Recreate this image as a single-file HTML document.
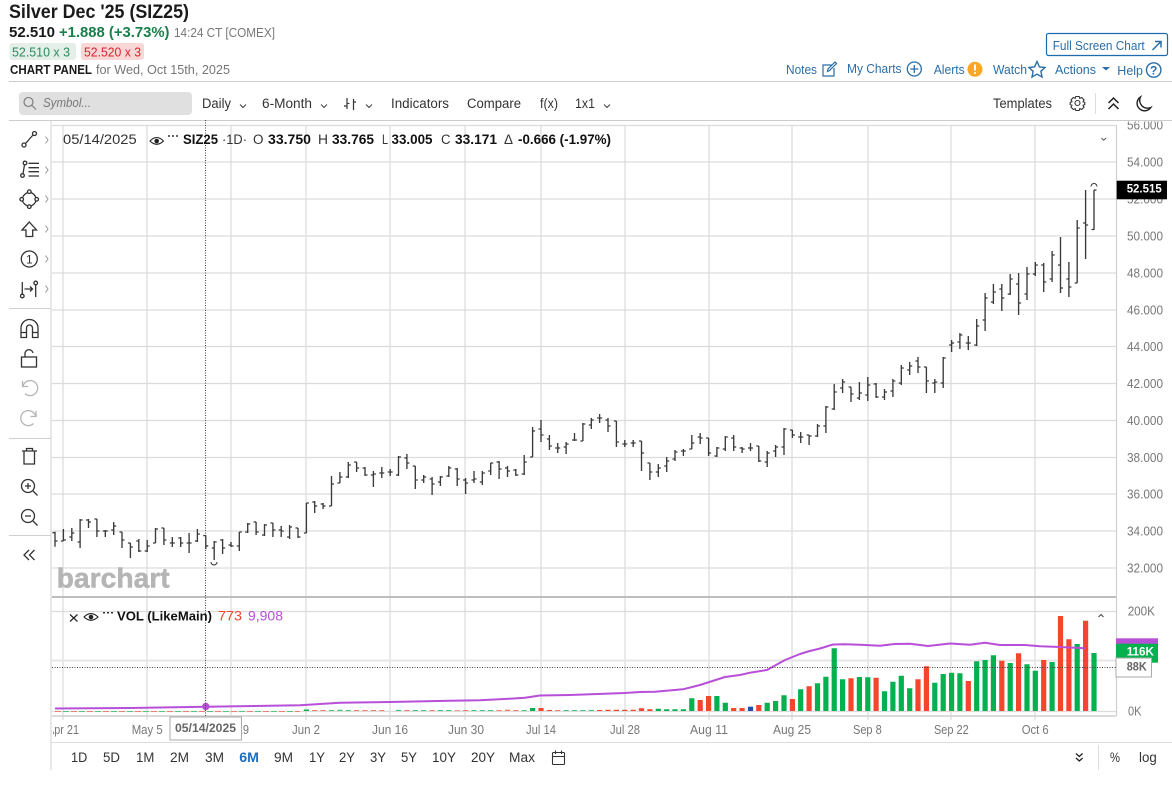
<!DOCTYPE html>
<html><head><meta charset="utf-8"><title>Silver Dec '25</title>
<style>
html,body{margin:0;padding:0;background:#fff;overflow:hidden}
svg{display:block}
text{font-family:"Liberation Sans",Arial,sans-serif;white-space:pre}
.b{font-weight:bold}
.t{font-size:13.5px;fill:#333}
.n{font-size:13px;fill:#2a6ea8}
.y{font-size:12.5px;fill:#777}
.x{font-size:12.5px;fill:#777}
.r{font-size:14px;fill:#333}
.i{fill:none;stroke:#333;stroke-width:1.3}
.g{fill:none;stroke:#b5b5b5;stroke-width:1.3}
</style></head><body>
<svg width="1172" height="787" viewBox="0 0 1172 787" xmlns="http://www.w3.org/2000/svg">
<rect width="1172" height="787" fill="#fff"/>

<!-- header -->
<text x="9" y="18" class="b" font-size="19" fill="#1a1a1a" textLength="180" lengthAdjust="spacingAndGlyphs">Silver Dec '25 (SIZ25)</text>
<text x="9" y="37" class="b" font-size="15" fill="#1a1a1a" textLength="46" lengthAdjust="spacingAndGlyphs">52.510</text>
<text x="59" y="37" class="b" font-size="15" fill="#1a7f4b" textLength="110.5" lengthAdjust="spacingAndGlyphs">+1.888 (+3.73%)</text>
<text x="174" y="37" font-size="13" fill="#777" textLength="101" lengthAdjust="spacingAndGlyphs">14:24 CT [COMEX]</text>
<rect x="9.5" y="43" width="66.5" height="17" rx="3" fill="#e3efe8"/>
<text x="12" y="56.5" font-size="13" fill="#2d8a5b" textLength="58" lengthAdjust="spacingAndGlyphs">52.510 x 3</text>
<rect x="81" y="43" width="63" height="17" rx="3" fill="#f8d7d7"/>
<text x="84" y="56.5" font-size="13" fill="#d9232e" textLength="57" lengthAdjust="spacingAndGlyphs">52.520 x 3</text>
<text x="10" y="74" class="b" font-size="12.5" fill="#1a1a1a" textLength="82" lengthAdjust="spacingAndGlyphs">CHART PANEL</text>
<text x="96" y="74" font-size="13" fill="#777" textLength="134" lengthAdjust="spacingAndGlyphs">for Wed, Oct 15th, 2025</text>
<path d="M9 81.5H1172" stroke="#ccc" stroke-width="1"/>

<!-- top-right links -->
<rect x="1046.5" y="33.5" width="121" height="22" rx="2" fill="#fff" stroke="#1e6bb0" stroke-width="1.2"/>
<text x="1052.7" y="50" class="n" textLength="92" lengthAdjust="spacingAndGlyphs">Full Screen Chart</text>
<path d="M1152.5 50L1160.5 42M1155 41.5H1161V47.5" fill="none" stroke="#2a6ea8" stroke-width="1.5"/>
<text x="786" y="74" class="n" textLength="31" lengthAdjust="spacingAndGlyphs">Notes</text>
<path d="M832 65H823V76H834V68M827.5 71.5L828 69L835 62L836.5 63.5L829.5 70.5Z" fill="none" stroke="#2a6ea8" stroke-width="1.2"/>
<text x="847" y="73" class="n" textLength="54.5" lengthAdjust="spacingAndGlyphs">My Charts</text>
<circle cx="914.3" cy="69" r="7" fill="none" stroke="#2a6ea8" stroke-width="1.3"/>
<path d="M910.3 69H918.3M914.3 65V73" stroke="#2a6ea8" stroke-width="1.3"/>
<text x="933.7" y="74" class="n" textLength="31" lengthAdjust="spacingAndGlyphs">Alerts</text>
<circle cx="975" cy="69.3" r="7.5" fill="#f9a825"/>
<path d="M975 64.5V70.5M975 72.3V74" stroke="#fff" stroke-width="2"/>
<text x="993" y="74" class="n" textLength="34" lengthAdjust="spacingAndGlyphs">Watch</text>
<path d="M1037 61.5L1039.4 66.8L1045 67.5L1040.9 71.3L1042 77L1037 74.2L1032 77L1033.1 71.3L1029 67.5L1034.6 66.8Z" fill="none" stroke="#2a6ea8" stroke-width="1.4"/>
<text x="1055" y="74" class="n" textLength="41" lengthAdjust="spacingAndGlyphs">Actions</text>
<path d="M1102 67H1110L1106 70.5Z" fill="#2a6ea8"/>
<text x="1117.3" y="75" class="n" textLength="25.7" lengthAdjust="spacingAndGlyphs">Help</text>
<circle cx="1153.7" cy="70" r="7.2" fill="none" stroke="#2a6ea8" stroke-width="1.4"/>
<text x="1153.7" y="74.5" text-anchor="middle" class="b" font-size="12" fill="#2a6ea8">?</text>

<!-- toolbar -->
<rect x="19" y="92" width="173" height="23" rx="4" fill="#e0e0e0"/>
<circle cx="28.5" cy="102" r="4.5" fill="none" stroke="#777" stroke-width="1.1"/>
<path d="M32 105.5L36 109.5" stroke="#777" stroke-width="1.1"/>
<text x="43" y="107" font-size="13" font-style="italic" fill="#777" textLength="48" lengthAdjust="spacingAndGlyphs">Symbol...</text>
<text x="202" y="108" class="t" textLength="29" lengthAdjust="spacingAndGlyphs">Daily</text>
<path d="M240 104.5L243 107.5L246 104.5M321 104.5L324 107.5L327 104.5M366 104.5L369 107.5L372 104.5M604 104.5L607 107.5L610 104.5" fill="none" stroke="#444" stroke-width="1"/>
<text x="262" y="108" class="t" textLength="50" lengthAdjust="spacingAndGlyphs">6-Month</text>
<path d="M347 98V109M344 106H347M353.500 99V110M353.500 102H356" fill="none" stroke="#333" stroke-width="1.2"/>
<path d="M349.500 103.500H347" stroke="#333" stroke-width="1"/>
<text x="391" y="108" class="t" textLength="58" lengthAdjust="spacingAndGlyphs">Indicators</text>
<text x="467" y="108" class="t" textLength="54" lengthAdjust="spacingAndGlyphs">Compare</text>
<text x="540" y="108" class="t" textLength="18" lengthAdjust="spacingAndGlyphs">f(x)</text>
<text x="575" y="108" class="t" textLength="20" lengthAdjust="spacingAndGlyphs">1x1</text>
<text x="993" y="108" class="t" textLength="59" lengthAdjust="spacingAndGlyphs">Templates</text>
<circle cx="1077.500" cy="103" r="2.500" fill="none" stroke="#333" stroke-width="1.1"/>
<path d="M1075.800 96.500H1079.200L1079.800 98.400L1081.700 97.500L1084 99.900L1083 101.700L1084.800 102.400V104.600L1083 105.300L1084 107.100L1081.700 109.500L1079.800 108.600L1079.200 110.500H1075.800L1075.200 108.600L1073.300 109.500L1071 107.100L1072 105.300L1070.200 104.600V102.400L1072 101.700L1071 99.900L1073.300 97.500L1075.200 98.400Z" fill="none" stroke="#333" stroke-width="1.1"/>
<path d="M1095.500 93V114" stroke="#ddd"/>
<path d="M1108.500 103L1113.500 98L1118.500 103M1108.500 109L1113.500 104L1118.500 109" fill="none" stroke="#222" stroke-width="1.5"/>
<path d="M1140.500 97A7.500 7.500 0 1 0 1150.800 107.500A7.800 7.800 0 0 1 1140.500 97Z" fill="none" stroke="#222" stroke-width="1.4"/>
<path d="M9 120.500H1172" stroke="#ccc" stroke-width="1"/>

<!-- grid -->
<g fill="none" stroke="#e2e2e2" stroke-width="1.500">
<path d="M63 125V720M147 125V720M231 125V720M306 125V720M390 125V720M465 125V720M541 125V720M625 125V720M709 125V720M792 125V720M868 125V720M951 125V720M1035 125V720"/>
</g>
<g fill="none" stroke="#dcdcdc" stroke-width="1.300">
<path d="M52 125.500H1116M52 162H1116M52 199H1116M52 236H1116M52 273H1116M52 310H1116M52 346.500H1116M52 383.500H1116M52 420.500H1116M52 457.500H1116M52 494H1116M52 531H1116M52 568H1116M52 611.500H1116M52 711.500H1116"/>
</g>
<path d="M52 660.500H1116" stroke="#e6e6e6" stroke-width="2"/>
<path d="M52 597H1116" stroke="#bdbdbd" stroke-width="2"/>
<path d="M52 716H1116" stroke="#cfcfcf" stroke-width="1.500"/>
<path d="M1116.500 125V716" stroke="#d0d0d0" stroke-width="1.200"/>
<path d="M51 120V770" stroke="#d0d0d0" stroke-width="1"/>
<path d="M51 742.500H1172" stroke="#ddd" stroke-width="1"/>

<!-- watermark -->
<text x="56.700" y="587.700" class="b" font-size="28" fill="#b5b5b5" stroke="#b5b5b5" stroke-width=".5" textLength="113" lengthAdjust="spacingAndGlyphs">barchart</text>

<!-- volume bars -->
<g fill="none" stroke-width="5.200">
<path stroke="#04b14e" d="M1094 711V653M1077.200 711V644M1052.100 711V662M1035.300 711V670.700M1027 711V664.300M1010.200 711V663M993.400 711V655.300M985.100 711V660M976.700 711V661.300M959.900 711V673.300M951.600 711V672.700M943.200 711V674M934.800 711V682.700M909.700 711V688.300M901.300 711V675.700M892.900 711V681.700M884.500 711V691.300M867.800 711V677.300M859.400 711V677M842.600 711V679.300M834.200 711V648.300M825.900 711V676.700M817.500 711V683.300M800.700 711V689.300M784 711V695.300M775.600 711V701M767.200 711V702.700M725.300 711V702.700M716.900 711V696M691.800 711V698.300M683.400 711V709.300M675 711V709.300M666.700 711V709.300M658.300 711V708.700M532.600 711V708M306.400 711V709.500"/>
<path stroke="#f4462c" d="M1085.600 711V620.700M1068.900 711V639.300M1060.500 711V616M1043.700 711V660M1018.600 711V653.300M1001.800 711V660.700M968.300 711V681M926.400 711V666.300M918 711V679.300M876.100 711V677.700M851 711V678.300M809.100 711V686.300M792.400 711V699M758.800 711V705M742.100 711V708M733.700 711V708M708.600 711V696M700.200 711V700M649.900 711V709.300M641.500 711V708.300M633.200 711V709.700M624.800 711V709.700M616.400 711V709.700M608 711V709.700M599.600 711V710M541 711V708M549.400 711V710"/>
<path stroke="#1f4fb5" d="M750.500 711V706.700"/>
<path stroke="#04b14e" stroke-opacity=".75" d="M591.300 711V709.900M582.900 711V710M574.500 711V710M566.100 711V710M490.700 711V710M482.300 711V710M474 711V710M348.300 711V710M339.900 711V709.700M331.500 711V710M423.700 711V710M440.400 711V710M448.800 711V710M398.500 711V709.900M415.300 711V710M524.200 711V710"/>
<path stroke="#f4462c" stroke-opacity=".7" d="M314.700 711V710M323.100 711V710M356.600 711V710M365 711V710M373.400 711V710M381.800 711V710M406.900 711V710M432.100 711V710M465.600 711V710M457.200 711V710.300M499.100 711V710M507.500 711V709.600M515.800 711V710M557.700 711V710"/>
</g>
<path d="M55 711.500H300" stroke="#f4462c" stroke-width="1" stroke-dasharray="6 10" stroke-opacity=".6"/>
<path d="M63 711.500H300" stroke="#04b14e" stroke-width="1" stroke-dasharray="6 10" stroke-opacity=".6"/>

<!-- volume MA -->
<path fill="none" stroke="#b84fd8" stroke-width="2" stroke-linejoin="round" d="M55 708.500L130 708L205.800 706.700L300 705.300L340 702.800L390 702L450 700.800L480 700.300L510 698.700L525 697.700L540 695.500L570 695L625 693L640 692L655 691.700L683 689.300L700 685L725 677L740 675L750 672.700L767 670L785 660L800 654L808 651.500L820 648.500L833 644.500L845 644.300L860 644.700L880 645.700L895 644L910 643.700L928 646L950 643.500L970 644.700L985 642.700L1000 645L1025 645L1040 646.300L1060 647L1085 648.300"/>
<circle cx="205.800" cy="706.500" r="3.700" fill="#b84fd8"/>

<!-- OHLC bars -->
<path fill="none" stroke="#3a3a3a" stroke-width="1.350" d="
M55 531.700V546.700M52.500 532.700H55M55 541H57.500
M63.400 529V541M60.900 541H63.400M63.400 540H65.900
M71.800 528V541M69.300 537H71.800M71.800 533H74.300
M80.100 519V548M77.600 542H80.100M80.100 520H82.600
M88.500 519V528M86 520H88.500M88.500 522H91
M96.900 519V537M94.400 519H96.900M96.900 531H99.400
M105.300 530V537M102.800 531H105.300M105.300 531H107.800
M113.700 522V535M111.200 530H113.700M113.700 526H116.200
M122 532V548M119.500 532H122M122 540H124.500
M130.400 543V558M127.900 543H130.400M130.400 547H132.900
M138.800 539V552M136.300 541H138.800M138.800 551H141.300
M147.200 540V552M144.700 551H147.200M147.200 546H149.700
M155.500 528V543M153 543H155.500M155.500 529H158
M163.900 528V545M161.400 528H163.900M163.900 540H166.400
M172.300 537V547M169.800 543H172.300M172.300 543H174.800
M180.700 537V547M178.200 538H180.700M180.700 543H183.200
M189.100 533V553M186.600 543H189.100M189.100 543H191.600
M197.400 529V542M194.900 541H197.400M197.400 534H199.900
M205.800 535.300V549.300M203.300 535.600H205.800M205.800 545.900H208.300
M214.200 541V560M211.700 548H214.200M214.200 542H216.700
M222.600 539V554M220.100 540H222.600M222.600 548H225.100
M231 542V547M228.500 545H231M231 546H233.500
M239.300 532V551M236.800 546H239.300M239.300 532H241.800
M247.700 523V533M245.200 532H247.700M247.700 524H250.200
M256.100 522V535M253.600 522H256.100M256.100 532H258.600
M264.500 524V536M262 535H264.500M264.500 525H267
M272.900 523V537M270.400 523H272.900M272.900 530H275.400
M281.200 526V537M278.700 530H281.200M281.200 531H283.700
M289.600 525V539M287.100 537H289.600M289.600 527H292.100
M298 528V538M295.500 528H298M298 537H300.500
M306.400 503V533M303.900 533H306.400M306.400 503H308.900
M314.700 501V513M312.200 502H314.700M314.700 506H317.200
M323.100 503V509M320.600 504H323.100M323.100 506H325.600
M331.500 476V506M329 506H331.500M331.500 484H334
M339.900 472V483M337.400 483H339.900M339.900 477H342.400
M348.300 462V478M345.800 477H348.300M348.300 465H350.800
M356.600 462V472M354.100 462H356.600M356.600 468H359.100
M365 467V476M362.500 468H365M365 475H367.500
M373.400 471V487M370.900 475H373.400M373.400 474H375.900
M381.800 467V478M379.300 473H381.800M381.800 473H384.300
M390.200 469V476M387.700 472H390.200M390.200 472H392.700
M398.500 456V476M396 475H398.500M398.500 457H401
M406.900 454V469M404.400 458H406.900M406.900 463H409.400
M415.300 466V489M412.800 466H415.300M415.300 480H417.800
M423.700 475V483M421.200 480H423.700M423.700 477H426.200
M432.100 477V495M429.600 479H432.100M432.100 484H434.600
M440.400 476V486M437.900 482H440.400M440.400 477H442.900
M448.800 466V477M446.300 476H448.800M448.800 468H451.300
M457.200 468V486M454.700 469H457.200M457.200 479H459.700
M465.600 478V494M463.100 480H465.600M465.600 483H468.100
M474 471V483M471.500 480H474M474 479H476.500
M482.300 471V485M479.800 482H482.300M482.300 473H484.800
M490.700 463V475M488.200 471H490.700M490.700 463H493.200
M499.100 461V479M496.600 462H499.100M499.100 469H501.600
M507.500 466V477M505 468H507.500M507.500 471H510
M515.800 469V476M513.300 470H515.800M515.800 475H518.300
M524.200 455V475M521.700 474H524.200M524.200 462H526.700
M532.600 427V457M530.100 457H532.600M532.600 431H535.100
M541 420V442M538.500 429H541M541 435H543.500
M549.400 435V450M546.900 439H549.400M549.400 446H551.900
M557.700 443V453M555.200 448H557.700M557.700 448H560.200
M566.100 442V454M563.600 447H566.100M566.100 444H568.600
M574.500 433V441M572 440H574.500M574.500 440H577
M582.900 423V441M580.400 441H582.900M582.900 424H585.400
M591.300 418V429M588.800 425H591.300M591.300 420H593.800
M599.600 414V423M597.100 418H599.600M599.600 418H602.100
M608 418V432M605.500 420H608M608 426H610.500
M616.400 421V447M613.900 421H616.400M616.400 442H618.900
M624.800 440V447M622.300 444H624.800M624.800 444H627.300
M633.200 440V447M630.700 443H633.200M633.200 443H635.700
M641.500 441V471M639 441H641.500M641.500 453H644
M649.900 463V480M647.400 463H649.900M649.900 472H652.400
M658.300 464V477M655.800 472H658.300M658.300 468H660.800
M666.700 457V472M664.200 466H666.700M666.700 461H669.200
M675 450V461M672.500 459H675M675 452H677.500
M683.400 449V456M680.900 451H683.400M683.400 451H685.900
M691.800 435V449M689.300 449H691.800M691.800 443H694.300
M700.200 433V444M697.700 437H700.200M700.200 438H702.700
M708.600 438V456M706.100 438H708.600M708.600 453H711.100
M716.900 447V457M714.400 456H716.900M716.900 448H719.400
M725.300 436V451M722.800 449H725.300M725.300 437H727.800
M733.700 435V451M731.200 438H733.700M733.700 447H736.200
M742.100 447V453M739.600 448H742.100M742.100 449H744.600
M750.500 443V451M748 448H750.500M750.500 448H753
M758.800 446V462M756.300 446H758.800M758.800 461H761.300
M767.200 451V467M764.700 462H767.200M767.200 453H769.700
M775.600 445V457M773.100 451H775.600M775.600 447H778.100
M784 428V455M781.500 447H784M784 429H786.500
M792.400 430V438M789.900 430H792.400M792.400 435H794.900
M800.700 432V443M798.200 437H800.700M800.700 437H803.200
M809.100 435V445M806.600 435H809.100M809.100 436H811.600
M817.500 424V437M815 436H817.500M817.500 426H820
M825.900 406V433M823.400 426H825.900M825.900 407H828.400
M834.200 384V410M831.700 409H834.200M834.200 392H836.700
M842.600 379V393M840.100 388H842.600M842.600 382H845.100
M851 387V402M848.500 387H851M851 394H853.500
M859.400 382V400M856.900 398H859.400M859.400 393H861.900
M867.800 377V401M865.300 395H867.800M867.800 385H870.300
M876.100 383V398M873.600 384H876.100M876.100 397H878.600
M884.500 389V400M882 397H884.500M884.500 392H887
M892.900 379V397M890.400 391H892.900M892.900 381H895.400
M901.300 365V385M898.800 383H901.300M901.300 368H903.800
M909.700 362V375M907.200 370H909.700M909.700 366H912.200
M918 357V373M915.500 361H918M918 367H920.500
M926.400 367V393M923.900 367H926.400M926.400 381H928.900
M934.800 379V393M932.300 383H934.800M934.800 382H937.300
M943.200 357V388M940.700 383H943.200M943.200 358H945.700
M951.600 340V352M949.100 345H951.600M951.600 343H954.100
M959.900 333V349M957.400 342H959.900M959.900 335H962.400
M968.300 336V350M965.800 343H968.300M968.300 343H970.800
M976.700 319V346M974.200 345H976.700M976.700 326H979.200
M985.100 293V331M982.600 320H985.100M985.100 298H987.600
M993.400 284V304M990.900 302H993.400M993.400 292H995.900
M1001.800 284V311M999.300 289H1001.800M1001.800 298H1004.300
M1010.200 274V295M1007.700 294H1010.200M1010.200 279H1012.700
M1018.600 273V315M1016.100 284H1018.600M1018.600 303H1021.100
M1027 267V300M1024.500 294H1027M1027 274H1029.500
M1035.300 262V276M1032.800 274H1035.300M1035.300 265H1037.800
M1043.700 263V292M1041.200 265H1043.700M1043.700 282H1046.200
M1052.100 251V282M1049.600 279H1052.100M1052.100 255H1054.600
M1060.500 237V293M1058 265H1060.500M1060.500 288H1063
M1068.900 262V297M1066.400 279H1068.900M1068.900 287H1071.400
M1077.200 220V283M1074.700 283H1077.200M1077.200 228H1079.700
M1085.600 190V259M1083.100 223H1085.600M1085.600 225H1088.100
M1094 190V230M1091.500 229.500H1094M1094 190H1096.500"/>
<path d="M1091 186.500A3 3 0 0 1 1097 186.500" fill="none" stroke="#333" stroke-width="1"/>
<path d="M211 562A3 3 0 0 0 217 562" fill="none" stroke="#333" stroke-width="1"/>

<!-- crosshair -->
<path d="M205.500 120V716M52 667.500H1116" stroke="#444" stroke-width="1" stroke-dasharray="1 1.500" fill="none"/>

<!-- legend -->
<text x="63" y="144" class="t" textLength="73.700" lengthAdjust="spacingAndGlyphs">05/14/2025</text>
<path d="M150 141Q156.700 134 163.500 141Q156.700 147.500 150 141Z" fill="none" stroke="#222" stroke-width="1.100"/>
<circle cx="156.700" cy="141" r="2.300" fill="#222"/>
<path d="M168 136H178" stroke="#333" stroke-width="1.500" stroke-dasharray="2 2"/>
<text x="183" y="144" class="b" font-size="13.500" fill="#111" textLength="35" lengthAdjust="spacingAndGlyphs">SIZ25</text>
<text x="222" y="144" class="t" textLength="25" lengthAdjust="spacingAndGlyphs">·1D·</text>
<text x="253" y="144" class="t" textLength="10.500" lengthAdjust="spacingAndGlyphs">O</text>
<text x="268" y="144" class="b" font-size="13.500" fill="#111" textLength="43" lengthAdjust="spacingAndGlyphs">33.750</text>
<text x="318" y="144" class="t" textLength="10" lengthAdjust="spacingAndGlyphs">H</text>
<text x="332" y="144" class="b" font-size="13.500" fill="#111" textLength="42" lengthAdjust="spacingAndGlyphs">33.765</text>
<text x="382" y="144" class="t" textLength="6" lengthAdjust="spacingAndGlyphs">L</text>
<text x="391.500" y="144" class="b" font-size="13.500" fill="#111" textLength="41" lengthAdjust="spacingAndGlyphs">33.005</text>
<text x="441" y="144" class="t" textLength="9.500" lengthAdjust="spacingAndGlyphs">C</text>
<text x="455" y="144" class="b" font-size="13.500" fill="#111" textLength="42" lengthAdjust="spacingAndGlyphs">33.171</text>
<text x="504" y="144" class="t" textLength="9" lengthAdjust="spacingAndGlyphs">Δ</text>
<text x="518" y="144" class="b" font-size="13.500" fill="#111" textLength="93" lengthAdjust="spacingAndGlyphs">-0.666 (-1.97%)</text>
<path d="M1101.500 138L1103.700 140.200L1106 138" fill="none" stroke="#555" stroke-width="1"/>

<!-- vol legend -->
<path d="M70 614.500L77.500 621.500M77.500 614.500L70 621.500" stroke="#222" stroke-width="1.200"/>
<path d="M84 617Q91 610 98 617Q91 623.500 84 617Z" fill="none" stroke="#222" stroke-width="1.100"/>
<circle cx="91" cy="617" r="2.300" fill="#222"/>
<path d="M103 612.700H113" stroke="#333" stroke-width="1.500" stroke-dasharray="2 2"/>
<text x="117" y="620.700" class="b" font-size="13" fill="#111" textLength="95" lengthAdjust="spacingAndGlyphs">VOL (LikeMain)</text>
<text x="218" y="620.700" font-size="14" fill="#f4462c" textLength="24" lengthAdjust="spacingAndGlyphs">773</text>
<text x="248" y="620.700" font-size="14" fill="#b84fd8" textLength="35" lengthAdjust="spacingAndGlyphs">9,908</text>
<path d="M1098.500 617L1101 614.500L1103.500 617" fill="none" stroke="#444" stroke-width="1"/>

<!-- y axis -->
<clipPath id="c"><rect x="1117" y="121.500" width="55" height="600"/></clipPath>
<g clip-path="url(#c)">
<text x="1127" y="129.500" class="y" textLength="36" lengthAdjust="spacingAndGlyphs">56.000</text>
<text x="1127" y="166.500" class="y" textLength="36" lengthAdjust="spacingAndGlyphs">54.000</text>
<text x="1127" y="203.500" class="y" textLength="36" lengthAdjust="spacingAndGlyphs">52.000</text>
<text x="1127" y="240.500" class="y" textLength="36" lengthAdjust="spacingAndGlyphs">50.000</text>
<text x="1127" y="277.500" class="y" textLength="36" lengthAdjust="spacingAndGlyphs">48.000</text>
<text x="1127" y="314.500" class="y" textLength="36" lengthAdjust="spacingAndGlyphs">46.000</text>
<text x="1127" y="351" class="y" textLength="36" lengthAdjust="spacingAndGlyphs">44.000</text>
<text x="1127" y="388" class="y" textLength="36" lengthAdjust="spacingAndGlyphs">42.000</text>
<text x="1127" y="425" class="y" textLength="36" lengthAdjust="spacingAndGlyphs">40.000</text>
<text x="1127" y="462" class="y" textLength="36" lengthAdjust="spacingAndGlyphs">38.000</text>
<text x="1127" y="498.500" class="y" textLength="36" lengthAdjust="spacingAndGlyphs">36.000</text>
<text x="1127" y="535.500" class="y" textLength="36" lengthAdjust="spacingAndGlyphs">34.000</text>
<text x="1127" y="572.500" class="y" textLength="36" lengthAdjust="spacingAndGlyphs">32.000</text>
<text x="1127.700" y="615.500" class="y" textLength="27.300" lengthAdjust="spacingAndGlyphs">200K</text>
<text x="1128" y="715.500" class="y" textLength="13.500" lengthAdjust="spacingAndGlyphs">0K</text>
</g>
<rect x="1116.700" y="180.700" width="50.300" height="18.600" fill="#000"/>
<text x="1126.700" y="192.700" class="b" font-size="12" fill="#fff" textLength="35" lengthAdjust="spacingAndGlyphs">52.515</text>
<rect x="1116" y="638.300" width="42" height="6" fill="#b84fd8"/>
<rect x="1116" y="643.700" width="42" height="19" fill="#04b14e"/>
<text x="1126.700" y="655.700" class="b" font-size="12" fill="#fff" textLength="27.300" lengthAdjust="spacingAndGlyphs">116K</text>
<rect x="1116" y="658" width="35.500" height="19" fill="#fff" stroke="#aaa" stroke-width="1"/>
<text x="1126.700" y="670.700" class="b" font-size="12" fill="#666" textLength="20" lengthAdjust="spacingAndGlyphs">88K</text>

<!-- x axis -->
<clipPath id="d"><rect x="53" y="722" width="1064" height="18"/></clipPath>
<g clip-path="url(#d)">
<text x="47" y="734" class="x" textLength="32" lengthAdjust="spacingAndGlyphs">Apr 21</text>
<text x="131.700" y="734" class="x" textLength="31" lengthAdjust="spacingAndGlyphs">May 5</text>
<text x="213" y="734" class="x" textLength="36" lengthAdjust="spacingAndGlyphs">May 19</text>
<text x="292" y="734" class="x" textLength="28" lengthAdjust="spacingAndGlyphs">Jun 2</text>
<text x="372" y="734" class="x" textLength="36" lengthAdjust="spacingAndGlyphs">Jun 16</text>
<text x="448" y="734" class="x" textLength="36" lengthAdjust="spacingAndGlyphs">Jun 30</text>
<text x="526" y="734" class="x" textLength="30" lengthAdjust="spacingAndGlyphs">Jul 14</text>
<text x="610" y="734" class="x" textLength="30" lengthAdjust="spacingAndGlyphs">Jul 28</text>
<text x="690" y="734" class="x" textLength="38" lengthAdjust="spacingAndGlyphs">Aug 11</text>
<text x="773" y="734" class="x" textLength="38" lengthAdjust="spacingAndGlyphs">Aug 25</text>
<text x="853" y="734" class="x" textLength="28.700" lengthAdjust="spacingAndGlyphs">Sep 8</text>
<text x="934" y="734" class="x" textLength="34.700" lengthAdjust="spacingAndGlyphs">Sep 22</text>
<text x="1021.700" y="734" class="x" textLength="27" lengthAdjust="spacingAndGlyphs">Oct 6</text>
</g>
<rect x="170" y="717" width="71.500" height="23" fill="#fff" stroke="#aaa" stroke-width="1"/>
<text x="175" y="732" class="b" font-size="11.500" fill="#666" textLength="61" lengthAdjust="spacingAndGlyphs">05/14/2025</text>

<!-- bottom toolbar -->
<text x="71" y="762" class="r" textLength="16.300" lengthAdjust="spacingAndGlyphs">1D</text>
<text x="103" y="762" class="r" textLength="17" lengthAdjust="spacingAndGlyphs">5D</text>
<text x="136" y="762" class="r" textLength="18.300" lengthAdjust="spacingAndGlyphs">1M</text>
<text x="170" y="762" class="r" textLength="19" lengthAdjust="spacingAndGlyphs">2M</text>
<text x="205" y="762" class="r" textLength="19" lengthAdjust="spacingAndGlyphs">3M</text>
<text x="239.300" y="762" class="b" font-size="14" fill="#1b6ec2" textLength="19.700" lengthAdjust="spacingAndGlyphs">6M</text>
<text x="274" y="762" class="r" textLength="19" lengthAdjust="spacingAndGlyphs">9M</text>
<text x="309" y="762" class="r" textLength="16" lengthAdjust="spacingAndGlyphs">1Y</text>
<text x="339" y="762" class="r" textLength="16" lengthAdjust="spacingAndGlyphs">2Y</text>
<text x="370" y="762" class="r" textLength="16" lengthAdjust="spacingAndGlyphs">3Y</text>
<text x="401" y="762" class="r" textLength="16" lengthAdjust="spacingAndGlyphs">5Y</text>
<text x="432" y="762" class="r" textLength="24" lengthAdjust="spacingAndGlyphs">10Y</text>
<text x="471" y="762" class="r" textLength="24" lengthAdjust="spacingAndGlyphs">20Y</text>
<text x="509" y="762" class="r" textLength="26" lengthAdjust="spacingAndGlyphs">Max</text>
<rect x="552.500" y="752.500" width="12" height="12" rx="1" fill="none" stroke="#333" stroke-width="1.100"/>
<path d="M552.500 756.500H564.500M555.500 750.500V754M561.500 750.500V754" fill="none" stroke="#333" stroke-width="1.100"/>
<path d="M1076 753.500L1079.300 756.500L1082.600 753.500M1076 758L1079.300 761L1082.600 758" fill="none" stroke="#222" stroke-width="1.300"/>
<path d="M1098.500 745V770" stroke="#ddd"/>
<text x="1110" y="762" class="r" textLength="10" lengthAdjust="spacingAndGlyphs">%</text>
<text x="1139" y="762" class="r" textLength="17.700" lengthAdjust="spacingAndGlyphs">log</text>

<!-- left toolbar -->
<path d="M9 308.500H51M9 438.500H51M9 535.500H51" stroke="#d0d0d0" stroke-width="1"/>
<path d="M45.500 136.500L48 140L45.500 143.500M45.500 166.500L48 170L45.500 173.500M45.500 195.500L48 199L45.500 202.500M45.500 225.500L48 229L45.500 232.500M45.500 255.500L48 259L45.500 262.500M45.500 285.500L48 289L45.500 292.500" fill="none" stroke="#999" stroke-width="1"/>
<g class="i">
<circle cx="24" cy="145" r="2"/><circle cx="34.500" cy="133.500" r="2"/><path d="M25.500 143.500L33 135"/>
<circle cx="25" cy="163" r="1.800"/><circle cx="22.500" cy="175.500" r="1.800"/><path d="M24.500 164.800L23 173.700M28.500 163.300H39M28.500 167.700H39M28.500 171.700H39M28.500 176H39"/>
<circle cx="29.300" cy="191.700" r="1.800"/><circle cx="21.700" cy="199.300" r="1.800"/><circle cx="36.700" cy="199.300" r="1.800"/><circle cx="29.300" cy="206.700" r="1.800"/><path d="M27.700 192.500Q24 194 22.500 197.700M31 192.500Q34.500 194 36 197.700M22.500 201Q24 204.500 27.700 206M36 201Q34.500 204.500 31 206"/>
<path d="M29.300 222L36.500 230H32.700V236.500H26V230H22Z"/>
<circle cx="29.300" cy="259" r="8"/>
<path d="M22.300 282V294M24.500 289H32.500M30 286.500L32.500 289L30 291.500M35.700 285V297"/><circle cx="22.300" cy="296" r="1.800"/><circle cx="35.700" cy="283" r="1.800"/>
<path d="M21 337.500V328A8.500 8.500 0 0 1 38 328V337.500H32.500V328A3 3 0 0 0 26.500 328V337.500ZM21 332.500H26.500M32.500 332.500H38"/>
<rect x="21.500" y="357" width="15" height="10"/><path d="M25 357V354.500A4 4 0 0 1 33 353"/>
<path d="M24 451H35M24 451V464H34.500V451M22 451H37M26.500 451V448.500H32.500V451"/>
<circle cx="28" cy="486" r="6.500"/><path d="M33 491L37.500 495.500M25 486H31M28 483V489"/>
<circle cx="28" cy="516" r="6.500"/><path d="M33 521L37.500 525.500M25 516H31"/>
<path d="M29 550L24 555L29 560M34.500 550L29.500 555L34.500 560"/>
</g>
<text x="29.300" y="263.500" text-anchor="middle" font-size="12" fill="#333">1</text>
<g class="g">
<path d="M23 386A7.500 7.500 0 1 1 25 393.500M22.500 381V386.500H28"/>
<path d="M35.500 416A7.500 7.500 0 1 0 33.500 423.500M36 411V416.500H30.500"/>
</g>
</svg>
</body></html>
